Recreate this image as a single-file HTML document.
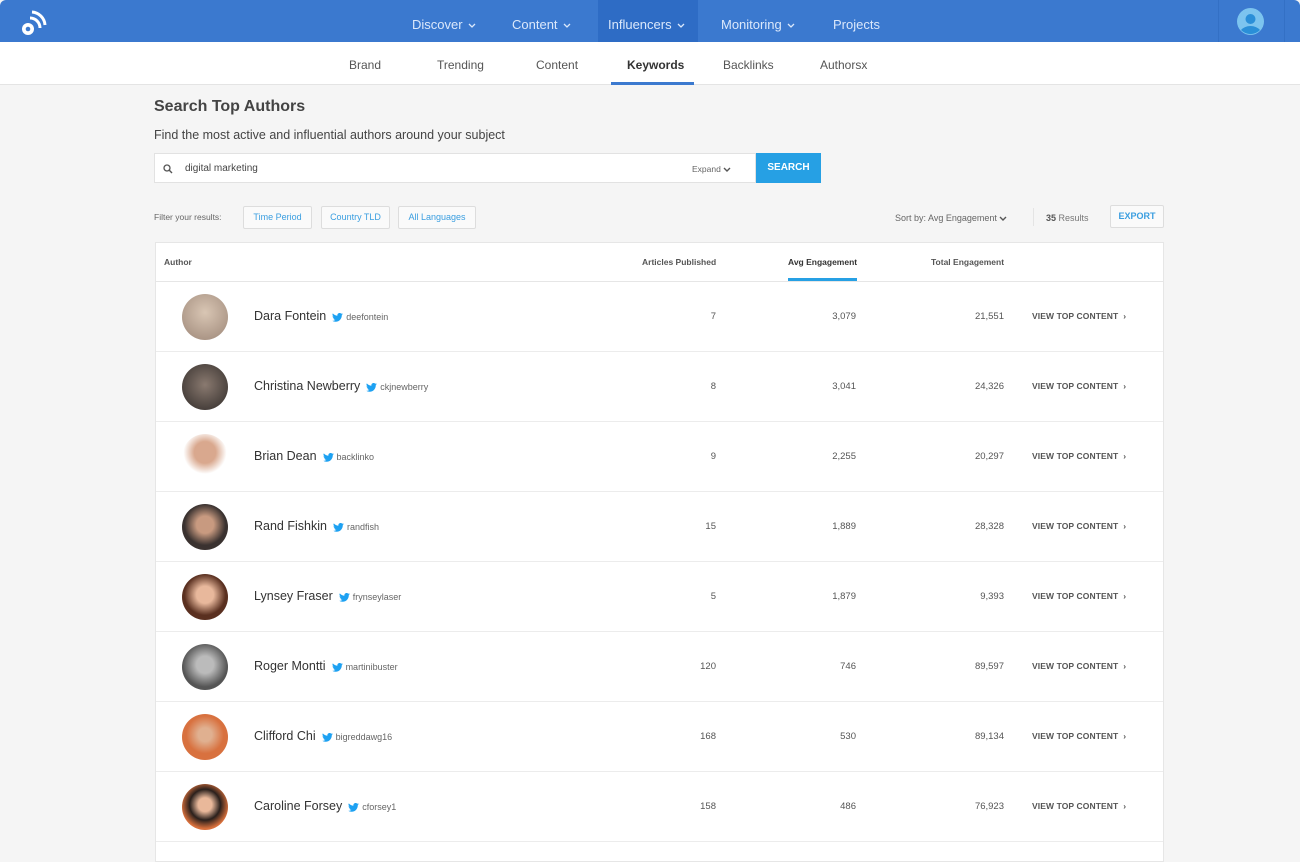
<!DOCTYPE html>
<html><head><meta charset="utf-8"><style>
*{box-sizing:border-box;margin:0;padding:0}
body{width:1300px;height:854px;overflow:hidden;background:#f5f5f5;font-family:"Liberation Sans",sans-serif;position:relative;color:#333}
.top{position:absolute;left:0;top:0;width:1300px;height:42px;background:#3b79cf;border-radius:6px 6px 0 0}
.nav{position:absolute;top:0;height:42px;line-height:50px;color:#dbe8fb;font-size:13px}
.nav svg{vertical-align:1px;margin-left:5px}
.act{position:absolute;left:598px;top:0;width:100px;height:42px;background:#2e6cc5}
.sub{position:absolute;top:42px;left:0;width:1300px;height:43px;background:#fff;border-bottom:1px solid #e4e4e4}
.sn{position:absolute;top:58px;font-size:12px;color:#555}
.abs{position:absolute}
.btn{position:absolute;top:206px;height:23px;border:1px solid #ddd;background:#fafafa;color:#3a9ee0;font-size:9px;line-height:21px;text-align:center;border-radius:2px}
.table{position:absolute;left:155px;top:242px;width:1009px;height:620px;background:#fff;border:1px solid #e6e6e6}
.th{position:absolute;top:257px;font-size:8.5px;color:#555;font-weight:bold}
.row{position:absolute;left:156px;width:1007px;height:70px;border-bottom:1px solid #ececec}
.av{position:absolute;left:26px;top:12px;width:46px;height:46px;border-radius:50%}
.nm{position:absolute;left:98px;top:27px;font-size:12.5px;color:#333}
.tw{font-size:9px;color:#666;margin-left:6px}
.tw svg{vertical-align:-2px;margin-right:3px}
.n{position:absolute;top:29px;font-size:9.5px;color:#555;text-align:right}
.vt{position:absolute;left:876px;top:29px;font-size:8.5px;color:#555;font-weight:bold;letter-spacing:.1px}
</style></head><body>
<div class="top"></div>
<div class="act"></div>
<svg class="abs" style="left:20px;top:9px" width="28" height="28" viewBox="0 0 28 28"><circle cx="8" cy="20" r="6" fill="#fff"/><circle cx="8" cy="20" r="2.3" fill="#3b79cf"/><path d="M10 9a10 10 0 0 1 10 10" stroke="#fff" stroke-width="3" fill="none"/><path d="M12 3a14 14 0 0 1 13 13" stroke="#fff" stroke-width="3" fill="none"/></svg>
<div class="nav" style="left:412px">Discover<svg width="8" height="5" viewBox="0 0 8 5"><path d="M1 1l3 3 3-3" stroke="#dbe8fb" stroke-width="1.3" fill="none"/></svg></div>
<div class="nav" style="left:512px">Content<svg width="8" height="5" viewBox="0 0 8 5"><path d="M1 1l3 3 3-3" stroke="#dbe8fb" stroke-width="1.3" fill="none"/></svg></div>
<div class="nav" style="left:608px">Influencers<svg width="8" height="5" viewBox="0 0 8 5"><path d="M1 1l3 3 3-3" stroke="#dbe8fb" stroke-width="1.3" fill="none"/></svg></div>
<div class="nav" style="left:721px">Monitoring<svg width="8" height="5" viewBox="0 0 8 5"><path d="M1 1l3 3 3-3" stroke="#dbe8fb" stroke-width="1.3" fill="none"/></svg></div>
<div class="nav" style="left:833px">Projects</div>
<div class="abs" style="left:1218px;top:0;width:1px;height:42px;background:#3370c5"></div>
<div class="abs" style="left:1284px;top:0;width:1px;height:42px;background:#3370c5"></div>
<svg class="abs" style="left:1237px;top:8px" width="27" height="27" viewBox="0 0 27 27"><circle cx="13.5" cy="13.5" r="13.5" fill="#7cc4ef"/><circle cx="13.5" cy="11" r="5" fill="#2a8fd8"/><path d="M4 22a11 8 0 0 1 19 0a13 13 0 0 1-19 0z" fill="#2a8fd8"/></svg>
<div class="sub"></div>
<div class="sn" style="left:349px">Brand</div>
<div class="sn" style="left:437px">Trending</div>
<div class="sn" style="left:536px">Content</div>
<div class="sn" style="left:627px;font-weight:bold;color:#333">Keywords</div>
<div class="abs" style="left:611px;top:82px;width:83px;height:3px;background:#3b79cf"></div>
<div class="sn" style="left:723px">Backlinks</div>
<div class="sn" style="left:820px">Authorsx</div>
<div class="abs" style="left:154px;top:98px;font-size:16px;font-weight:bold;color:#444">Search Top Authors</div>
<div class="abs" style="left:154px;top:128px;font-size:12.5px;color:#444">Find the most active and influential authors around your subject</div>
<div class="abs" style="left:154px;top:153px;width:602px;height:30px;background:#fff;border:1px solid #e2e2e2"></div>
<svg class="abs" style="left:163px;top:164px" width="10" height="10" viewBox="0 0 10 10"><circle cx="4" cy="4" r="3" stroke="#555" stroke-width="1.3" fill="none"/><path d="M6.3 6.3L9 9" stroke="#555" stroke-width="1.4"/></svg>
<div class="abs" style="left:185px;top:163px;font-size:10px;color:#444">digital marketing</div>
<div class="abs" style="left:692px;top:164px;font-size:8.5px;color:#666">Expand <svg width="8" height="5" viewBox="0 0 8 5"><path d="M1 1l3 3 3-3" stroke="#555" stroke-width="1.4" fill="none"/></svg></div>
<div class="abs" style="left:756px;top:153px;width:65px;height:30px;background:#26a0e4;color:#fff;font-size:10px;font-weight:bold;text-align:center;line-height:30px">SEARCH</div>
<div class="abs" style="left:154px;top:212px;font-size:8.5px;color:#666">Filter your results:</div>
<div class="btn" style="left:243px;width:69px">Time Period</div>
<div class="btn" style="left:321px;width:69px">Country TLD</div>
<div class="btn" style="left:398px;width:78px">All Languages</div>
<div class="abs" style="left:895px;top:213px;font-size:9px;color:#666">Sort by: Avg Engagement <svg width="8" height="5" viewBox="0 0 8 5"><path d="M1 1l3 3 3-3" stroke="#555" stroke-width="1.4" fill="none"/></svg></div>
<div class="abs" style="left:1033px;top:208px;width:1px;height:18px;background:#e4e4e4"></div>
<div class="abs" style="left:1046px;top:213px;font-size:9px;color:#777"><b style="color:#555">35</b> Results</div>
<div class="btn" style="left:1110px;top:205px;width:54px;font-weight:bold">EXPORT</div>
<div class="table"></div>
<div class="abs" style="left:156px;top:281px;width:1007px;height:1px;background:#e6e6e6"></div>
<div class="th" style="left:164px">Author</div>
<div class="th" style="left:642px">Articles Published</div>
<div class="th" style="left:788px;color:#333">Avg Engagement</div>
<div class="abs" style="left:788px;top:278px;width:69px;height:3px;background:#26a0e4"></div>
<div class="th" style="left:931px">Total Engagement</div>

<div class="row" style="top:282px"><div class="av" style="background:radial-gradient(circle at 50% 40%,#d9c6b4,#9c8677)"></div><div class="nm">Dara Fontein<span class="tw"><svg width="11" height="9" viewBox="0 0 24 20"><path d="M24 2.4a10 10 0 0 1-2.8.8A5 5 0 0 0 23.3.4a10 10 0 0 1-3.1 1.2A4.9 4.9 0 0 0 11.8 6 14 14 0 0 1 1.7.9a4.9 4.9 0 0 0 1.5 6.6A4.9 4.9 0 0 1 1 6.9a4.9 4.9 0 0 0 3.9 4.9 5 5 0 0 1-2.2.1 4.9 4.9 0 0 0 4.6 3.4A9.9 9.9 0 0 1 0 17.3 14 14 0 0 0 7.5 19.5c9 0 14-7.5 14-14v-.6A10 10 0 0 0 24 2.4z" fill="#1da1f2"/></svg>deefontein</span></div><div class="n" style="right:447px">7</div><div class="n" style="right:307px">3,079</div><div class="n" style="right:159px">21,551</div><div class="vt">VIEW TOP CONTENT &nbsp;›</div></div>
<div class="row" style="top:352px"><div class="av" style="background:radial-gradient(circle at 50% 45%,#8a7a70,#2f2a28)"></div><div class="nm">Christina Newberry<span class="tw"><svg width="11" height="9" viewBox="0 0 24 20"><path d="M24 2.4a10 10 0 0 1-2.8.8A5 5 0 0 0 23.3.4a10 10 0 0 1-3.1 1.2A4.9 4.9 0 0 0 11.8 6 14 14 0 0 1 1.7.9a4.9 4.9 0 0 0 1.5 6.6A4.9 4.9 0 0 1 1 6.9a4.9 4.9 0 0 0 3.9 4.9 5 5 0 0 1-2.2.1 4.9 4.9 0 0 0 4.6 3.4A9.9 9.9 0 0 1 0 17.3 14 14 0 0 0 7.5 19.5c9 0 14-7.5 14-14v-.6A10 10 0 0 0 24 2.4z" fill="#1da1f2"/></svg>ckjnewberry</span></div><div class="n" style="right:447px">8</div><div class="n" style="right:307px">3,041</div><div class="n" style="right:159px">24,326</div><div class="vt">VIEW TOP CONTENT &nbsp;›</div></div>
<div class="row" style="top:422px"><div class="av" style="background:radial-gradient(circle at 50% 40%,#d9a88e 30%,#fff 60%)"></div><div class="nm">Brian Dean<span class="tw"><svg width="11" height="9" viewBox="0 0 24 20"><path d="M24 2.4a10 10 0 0 1-2.8.8A5 5 0 0 0 23.3.4a10 10 0 0 1-3.1 1.2A4.9 4.9 0 0 0 11.8 6 14 14 0 0 1 1.7.9a4.9 4.9 0 0 0 1.5 6.6A4.9 4.9 0 0 1 1 6.9a4.9 4.9 0 0 0 3.9 4.9 5 5 0 0 1-2.2.1 4.9 4.9 0 0 0 4.6 3.4A9.9 9.9 0 0 1 0 17.3 14 14 0 0 0 7.5 19.5c9 0 14-7.5 14-14v-.6A10 10 0 0 0 24 2.4z" fill="#1da1f2"/></svg>backlinko</span></div><div class="n" style="right:447px">9</div><div class="n" style="right:307px">2,255</div><div class="n" style="right:159px">20,297</div><div class="vt">VIEW TOP CONTENT &nbsp;›</div></div>
<div class="row" style="top:492px"><div class="av" style="background:radial-gradient(circle at 50% 45%,#c89a80 25%,#3a3230 60%)"></div><div class="nm">Rand Fishkin<span class="tw"><svg width="11" height="9" viewBox="0 0 24 20"><path d="M24 2.4a10 10 0 0 1-2.8.8A5 5 0 0 0 23.3.4a10 10 0 0 1-3.1 1.2A4.9 4.9 0 0 0 11.8 6 14 14 0 0 1 1.7.9a4.9 4.9 0 0 0 1.5 6.6A4.9 4.9 0 0 1 1 6.9a4.9 4.9 0 0 0 3.9 4.9 5 5 0 0 1-2.2.1 4.9 4.9 0 0 0 4.6 3.4A9.9 9.9 0 0 1 0 17.3 14 14 0 0 0 7.5 19.5c9 0 14-7.5 14-14v-.6A10 10 0 0 0 24 2.4z" fill="#1da1f2"/></svg>randfish</span></div><div class="n" style="right:447px">15</div><div class="n" style="right:307px">1,889</div><div class="n" style="right:159px">28,328</div><div class="vt">VIEW TOP CONTENT &nbsp;›</div></div>
<div class="row" style="top:562px"><div class="av" style="background:radial-gradient(circle at 50% 45%,#e8b89c 25%,#5a3020 60%)"></div><div class="nm">Lynsey Fraser<span class="tw"><svg width="11" height="9" viewBox="0 0 24 20"><path d="M24 2.4a10 10 0 0 1-2.8.8A5 5 0 0 0 23.3.4a10 10 0 0 1-3.1 1.2A4.9 4.9 0 0 0 11.8 6 14 14 0 0 1 1.7.9a4.9 4.9 0 0 0 1.5 6.6A4.9 4.9 0 0 1 1 6.9a4.9 4.9 0 0 0 3.9 4.9 5 5 0 0 1-2.2.1 4.9 4.9 0 0 0 4.6 3.4A9.9 9.9 0 0 1 0 17.3 14 14 0 0 0 7.5 19.5c9 0 14-7.5 14-14v-.6A10 10 0 0 0 24 2.4z" fill="#1da1f2"/></svg>frynseylaser</span></div><div class="n" style="right:447px">5</div><div class="n" style="right:307px">1,879</div><div class="n" style="right:159px">9,393</div><div class="vt">VIEW TOP CONTENT &nbsp;›</div></div>
<div class="row" style="top:632px"><div class="av" style="background:radial-gradient(circle at 50% 45%,#bbb 25%,#555 65%)"></div><div class="nm">Roger Montti<span class="tw"><svg width="11" height="9" viewBox="0 0 24 20"><path d="M24 2.4a10 10 0 0 1-2.8.8A5 5 0 0 0 23.3.4a10 10 0 0 1-3.1 1.2A4.9 4.9 0 0 0 11.8 6 14 14 0 0 1 1.7.9a4.9 4.9 0 0 0 1.5 6.6A4.9 4.9 0 0 1 1 6.9a4.9 4.9 0 0 0 3.9 4.9 5 5 0 0 1-2.2.1 4.9 4.9 0 0 0 4.6 3.4A9.9 9.9 0 0 1 0 17.3 14 14 0 0 0 7.5 19.5c9 0 14-7.5 14-14v-.6A10 10 0 0 0 24 2.4z" fill="#1da1f2"/></svg>martinibuster</span></div><div class="n" style="right:447px">120</div><div class="n" style="right:307px">746</div><div class="n" style="right:159px">89,597</div><div class="vt">VIEW TOP CONTENT &nbsp;›</div></div>
<div class="row" style="top:702px"><div class="av" style="background:radial-gradient(circle at 50% 45%,#e0b090 20%,#d8713f 55%)"></div><div class="nm">Clifford Chi<span class="tw"><svg width="11" height="9" viewBox="0 0 24 20"><path d="M24 2.4a10 10 0 0 1-2.8.8A5 5 0 0 0 23.3.4a10 10 0 0 1-3.1 1.2A4.9 4.9 0 0 0 11.8 6 14 14 0 0 1 1.7.9a4.9 4.9 0 0 0 1.5 6.6A4.9 4.9 0 0 1 1 6.9a4.9 4.9 0 0 0 3.9 4.9 5 5 0 0 1-2.2.1 4.9 4.9 0 0 0 4.6 3.4A9.9 9.9 0 0 1 0 17.3 14 14 0 0 0 7.5 19.5c9 0 14-7.5 14-14v-.6A10 10 0 0 0 24 2.4z" fill="#1da1f2"/></svg>bigreddawg16</span></div><div class="n" style="right:447px">168</div><div class="n" style="right:307px">530</div><div class="n" style="right:159px">89,134</div><div class="vt">VIEW TOP CONTENT &nbsp;›</div></div>
<div class="row" style="top:772px"><div class="av" style="background:radial-gradient(circle at 50% 45%,#e9b89a 20%,#2a201c 45%,#d8703c 70%)"></div><div class="nm">Caroline Forsey<span class="tw"><svg width="11" height="9" viewBox="0 0 24 20"><path d="M24 2.4a10 10 0 0 1-2.8.8A5 5 0 0 0 23.3.4a10 10 0 0 1-3.1 1.2A4.9 4.9 0 0 0 11.8 6 14 14 0 0 1 1.7.9a4.9 4.9 0 0 0 1.5 6.6A4.9 4.9 0 0 1 1 6.9a4.9 4.9 0 0 0 3.9 4.9 5 5 0 0 1-2.2.1 4.9 4.9 0 0 0 4.6 3.4A9.9 9.9 0 0 1 0 17.3 14 14 0 0 0 7.5 19.5c9 0 14-7.5 14-14v-.6A10 10 0 0 0 24 2.4z" fill="#1da1f2"/></svg>cforsey1</span></div><div class="n" style="right:447px">158</div><div class="n" style="right:307px">486</div><div class="n" style="right:159px">76,923</div><div class="vt">VIEW TOP CONTENT &nbsp;›</div></div>
</body></html>
